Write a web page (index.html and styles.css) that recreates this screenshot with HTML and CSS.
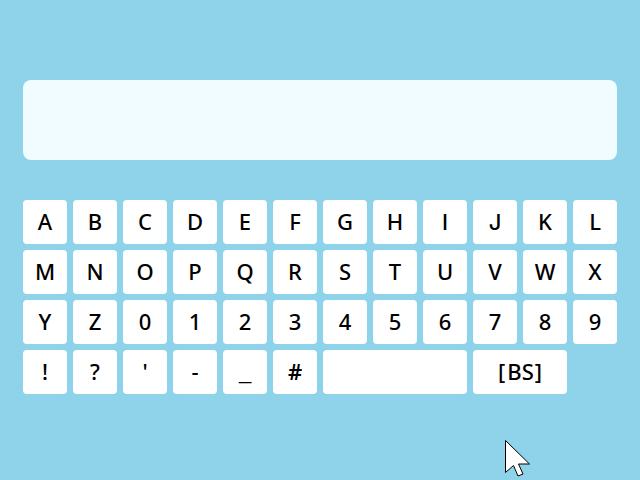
FILE: index.html
```html
<!DOCTYPE html>
<html lang="en"><head><meta charset="utf-8"><title>Keyboard</title><link rel="stylesheet" href="styles.css"></head>
<body>
<main class="screen">
<div class="display"></div>
<div class="keys">
<div class="key">A</div><div class="key">B</div><div class="key">C</div><div class="key">D</div><div class="key">E</div><div class="key">F</div><div class="key">G</div><div class="key">H</div><div class="key plain">I</div><div class="key plain">J</div><div class="key">K</div><div class="key">L</div>
<div class="key">M</div><div class="key">N</div><div class="key">O</div><div class="key">P</div><div class="key">Q</div><div class="key">R</div><div class="key">S</div><div class="key">T</div><div class="key">U</div><div class="key">V</div><div class="key">W</div><div class="key">X</div>
<div class="key">Y</div><div class="key">Z</div><div class="key">0</div><div class="key">1</div><div class="key">2</div><div class="key">3</div><div class="key">4</div><div class="key">5</div><div class="key">6</div><div class="key">7</div><div class="key">8</div><div class="key">9</div>
<div class="key">!</div><div class="key">?</div><div class="key">'</div><div class="key">-</div><div class="key underscore">_</div><div class="key hash">#</div><div class="key space"></div><div class="key back">[<span class="label">BS</span>]</div>
</div>
</main>
<svg class="cursor" width="28" height="40" viewBox="0 0 28 40"><path d="M1.5 1.5V33.5L9.5 26.5L14 37L19 35L14.5 25H25.500Z" fill="#fff" stroke="#000"/></svg>
</body></html>
```
FILE: styles.css
```css
body { margin: 0; background: #8fd3ea; overflow: hidden; }
.screen { height: 480px; box-sizing: border-box; padding: 80px 23px 0; }
.display { height: 80px; border-radius: 8px; background: #f0fcff; margin-bottom: 40px; }
.keys { display: grid; grid-template-columns: repeat(12, 44px); grid-auto-rows: 44px; gap: 6px; }
.key { display: flex; align-items: center; justify-content: center; box-sizing: border-box; padding: 0 0 2px; background: #fff; border-radius: 4px; color: #000; font: 500 22px/42px "Noto Sans", sans-serif; }
.plain { font-family: Inter, sans-serif; font-weight: 500; padding-bottom: 0; }
.underscore { font-family: "Liberation Sans", sans-serif; font-weight: 400; padding-bottom: 0; }
.hash { font-weight: 600; }
.space { grid-column: span 3; }
.back { grid-column: span 2; }
.label { margin: 0 1px 0 2px; }
.cursor { position: absolute; left: 504px; top: 439px; }
```
